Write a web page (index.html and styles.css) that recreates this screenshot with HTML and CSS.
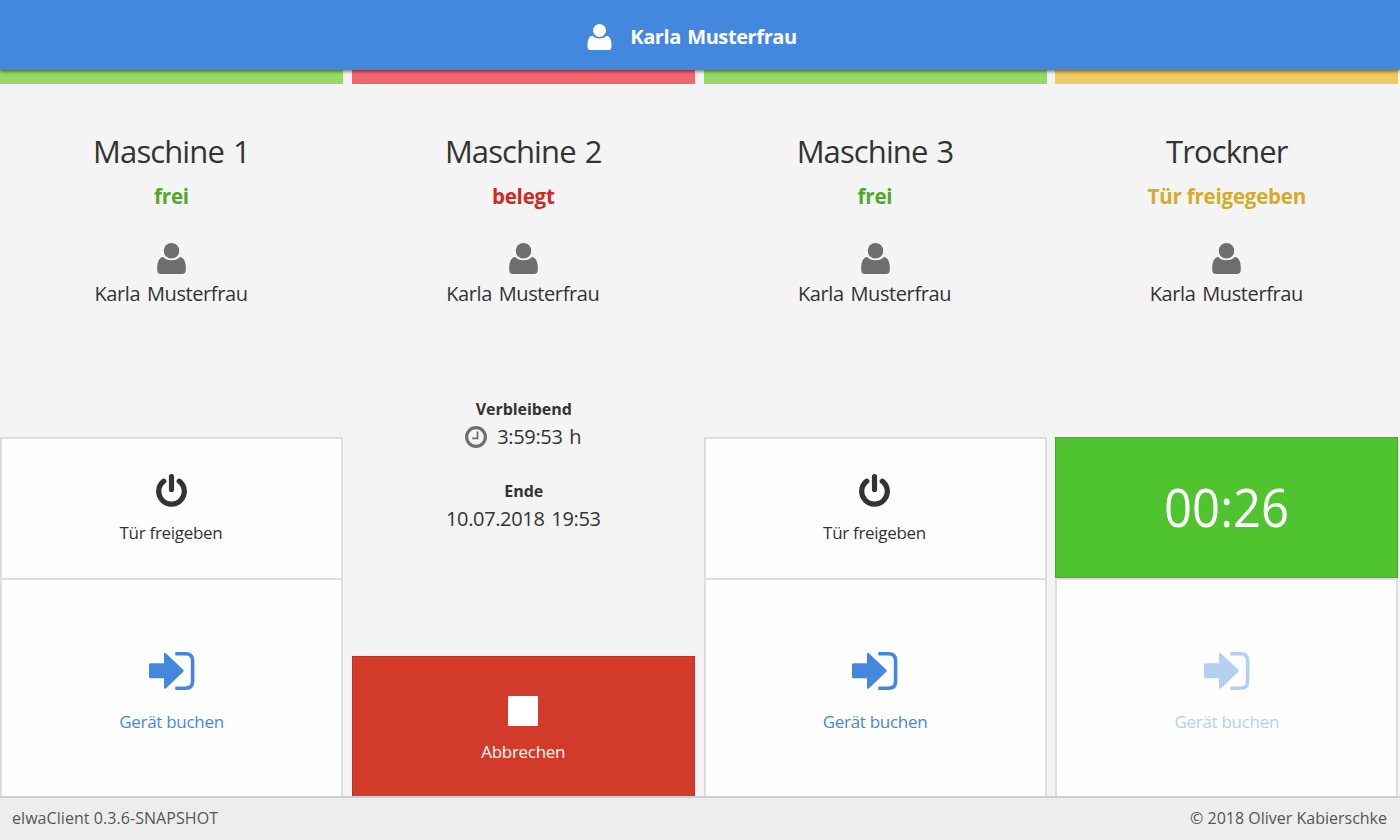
FILE: index.html
```html
<!DOCTYPE html>
<html lang="de">
<head>
<meta charset="utf-8">
<title>elwaClient</title>
<link rel="stylesheet" href="styles.css">
</head>
<body>
<svg class="sprite" aria-hidden="true">
  <symbol id="user" viewBox="0 0 29 31">
    <circle cx="14.5" cy="7.8" r="7.7"/>
    <path d="M6.2 13.9C8.2 16 11 17.2 14.5 17.2S20.8 16 22.8 13.9C26.8 14.4 28.8 18.5 28.8 25.5V27Q28.8 31 24.8 31H4.2Q.2 31 .2 27V25.5C.2 18.5 2.2 14.4 6.2 13.9Z"/>
  </symbol>
  <symbol id="power" viewBox="0 0 31 33">
    <path d="M7.8 7.2A12.8 12.8 0 1 0 23.2 7.2M15.5 2.6V15.4" fill="none" stroke="currentColor" stroke-width="5.2" stroke-linecap="round"/>
  </symbol>
  <symbol id="signin" viewBox="0 0 46 38">
    <path d="M1.5 11.3H15V2.2Q15 .2 16.8 1.2L34.3 17.8Q35.3 18.8 34.3 19.8L16.8 36.4Q15 37.4 15 35.4V26.3H1.5Q0 26.3 0 24.8V12.8Q0 11.3 1.5 11.3Z"/>
    <path d="M26.3 1.8H36.5Q43.6 1.8 43.6 8.8V29.2Q43.6 36.2 36.5 36.2H26.3" fill="none" stroke="currentColor" stroke-width="3.6"/>
  </symbol>
  <symbol id="clock" viewBox="0 0 22 22">
    <circle cx="11" cy="11" r="9.4" fill="none" stroke="currentColor" stroke-width="3.1"/>
    <path d="M12.5 5.5V12.3H7.2" fill="none" stroke="currentColor" stroke-width="1.8"/>
  </symbol>
</svg>
<header class="topbar">
  <svg class="topbar-icon"><use href="#user"/></svg>
  <span class="topbar-name">Karla Musterfrau</span>
</header>
<main class="machines">
  <section class="machine free">
    <h2 class="title">Maschine 1</h2>
    <p class="status">frei</p>
    <svg class="user-icon"><use href="#user"/></svg>
    <p class="user-name">Karla Musterfrau</p>
    <div class="actions">
      <button class="btn release"><svg class="power-icon"><use href="#power"/></svg><span class="label">Tür freigeben</span></button>
      <button class="btn book"><svg class="signin-icon"><use href="#signin"/></svg><span class="label">Gerät buchen</span></button>
    </div>
  </section>
  <section class="machine busy">
    <h2 class="title">Maschine 2</h2>
    <p class="status">belegt</p>
    <svg class="user-icon"><use href="#user"/></svg>
    <p class="user-name">Karla Musterfrau</p>
    <dl class="times">
      <dt class="caption">Verbleibend</dt>
      <dd class="value remaining"><svg class="clock-icon"><use href="#clock"/></svg><span>3:59:53 h</span></dd>
      <dt class="caption end-caption">Ende</dt>
      <dd class="value">10.07.2018 19:53</dd>
    </dl>
    <div class="actions">
      <button class="btn abort"><span class="stop-icon"></span><span class="label">Abbrechen</span></button>
    </div>
  </section>
  <section class="machine free">
    <h2 class="title">Maschine 3</h2>
    <p class="status">frei</p>
    <svg class="user-icon"><use href="#user"/></svg>
    <p class="user-name">Karla Musterfrau</p>
    <div class="actions">
      <button class="btn release"><svg class="power-icon"><use href="#power"/></svg><span class="label">Tür freigeben</span></button>
      <button class="btn book"><svg class="signin-icon"><use href="#signin"/></svg><span class="label">Gerät buchen</span></button>
    </div>
  </section>
  <section class="machine open">
    <h2 class="title">Trockner</h2>
    <p class="status">Tür freigegeben</p>
    <svg class="user-icon"><use href="#user"/></svg>
    <p class="user-name">Karla Musterfrau</p>
    <div class="actions">
      <button class="btn countdown"><span class="timer">00:26</span></button>
      <button class="btn book disabled" disabled><svg class="signin-icon"><use href="#signin"/></svg><span class="label">Gerät buchen</span></button>
    </div>
  </section>
</main>
<footer class="footer">
  <span class="version">elwaClient 0.3.6-SNAPSHOT</span>
  <span class="copyright">© 2018 Oliver Kabierschke</span>
</footer>
</body>
</html>
```
FILE: styles.css
```css
* { box-sizing: border-box; }
body {
  margin: 0;
  height: 840px;
  display: flex;
  flex-direction: column;
  overflow: hidden;
  background: #f4f4f4;
  color: #333;
  font-family: "Open Sans", "Noto Sans", sans-serif;
  white-space: nowrap;
}
svg { display: block; fill: currentColor; }
.sprite { width: 0; height: 0; position: absolute; }

.topbar {
  position: relative;
  z-index: 1;
  flex: none;
  height: 70px;
  display: flex;
  align-items: center;
  justify-content: center;
  gap: 18px;
  padding-right: 16px;
  padding-top: 3px;
  background: #4488de;
  color: #fff;
  box-shadow: 0 1px 4px rgba(0, 0, 0, .65);
}
.topbar-icon { width: 25px; height: 26px; }
.topbar-name { font-size: 20px; font-weight: 700; line-height: 30px; letter-spacing: -.4px; word-spacing: 1.5px; }

.machines {
  flex: 1;
  min-height: 0;
  display: grid;
  grid-template-columns: repeat(4, 343px);
  justify-content: space-between;
  padding-right: 1.7px;
}
.machine {
  display: flex;
  flex-direction: column;
  align-items: center;
  border-top: 14px solid;
}
.free { border-top-color: #95db66; }
.busy { border-top-color: #f2666f; }
.open { border-top-color: #f1cb63; }
.title { margin: 45px 0 0; font-size: 31px; font-weight: 400; line-height: 44px; letter-spacing: -.9px; word-spacing: 2px; }
.status { margin: 8px 0 0; font-size: 20.5px; font-weight: 700; line-height: 30px; letter-spacing: -.2px; }
.free .status { color: #53a62e; }
.busy .status { color: #cf2a1f; }
.open .status { color: #d3ac2b; }
.user-icon { width: 29px; height: 31px; margin-top: 32px; color: #6e6e6e; }
.user-name { margin: 5px 1px 0 0; font-size: 20px; line-height: 30px; letter-spacing: -.4px; word-spacing: 2px; }

.times { margin: 88px 0 0; text-align: center; }
.caption { padding-left: 1px; font-size: 16px; font-weight: 700; line-height: 24px; letter-spacing: -.05px; }
.value { margin: 1px 0 0; font-size: 20px; line-height: 30px; letter-spacing: -.35px; word-spacing: 2px; }
.remaining { display: flex; align-items: center; justify-content: center; gap: 10px; }
.clock-icon { width: 22px; height: 22px; color: #6e6e6e; }
.end-caption { margin-top: 27px; }

.actions { margin-top: auto; width: 100%; }
.btn {
  width: 100%;
  display: flex;
  flex-direction: column;
  align-items: center;
  border: 2px solid #dedede;
  border-bottom: 0;
  background: #fefefe;
  color: #333;
  padding: 0;
  font: inherit;
}
.release { height: 141px; padding-top: 35px; padding-right: 1px; gap: 14px; }
.power-icon { width: 31px; height: 33px; }
.label { font-size: 17px; line-height: 24px; letter-spacing: -.3px; }
.book { height: 218px; padding-top: 72px; gap: 20px; color: #4488de; }
.signin-icon { width: 46px; height: 38px; }
.disabled { color: #b5cff1; }
.abort {
  height: 140px;
  padding-top: 39px;
  gap: 14px;
  background: #d23a29;
  border: 1px solid #b93427;
  border-bottom: 0;
  color: #fff;
}
.stop-icon { width: 30px; height: 30px; border-radius: 1px; background: #fff; }
.countdown {
  height: 141px;
  justify-content: center;
  background: #50c42e;
  border: 1px solid #46a92c;
  color: #fff;
  padding-bottom: 1px;
}
.timer { font-size: 53px; line-height: 70px; transform: scaleX(.925); }

.footer {
  flex: none;
  height: 44px;
  display: flex;
  align-items: center;
  justify-content: space-between;
  padding: 0 13px 2px 12px;
  border-top: 2px solid #cdcdcd;
  background: #ededed;
  color: #555;
  font-size: 16px;
}
.version { letter-spacing: .06px; }
```
